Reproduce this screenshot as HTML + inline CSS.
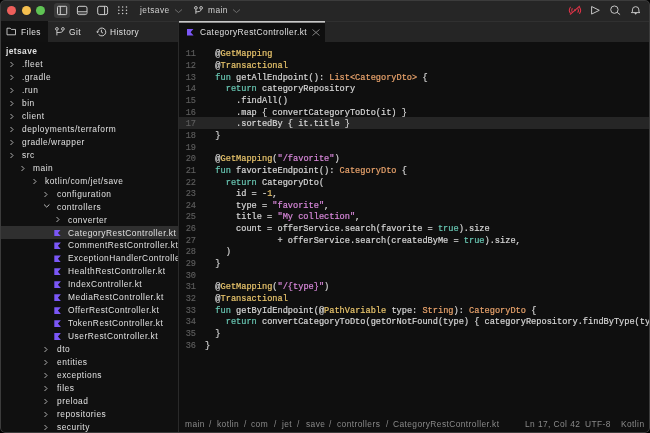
<!DOCTYPE html>
<html><head><meta charset="utf-8">
<style>
*{margin:0;padding:0;box-sizing:border-box}
html,body{width:650px;height:433px;overflow:hidden;background:#000}
body{position:relative;font-family:"Liberation Sans",sans-serif}
.ui,.cl,.ln,.status{will-change:transform}
.win{position:absolute;left:0;top:0;width:650px;height:433px;border-radius:5px;background:#101010;overflow:hidden}
.frame{position:absolute;left:0;top:0;width:650px;height:433px;border-radius:5px;border:1px solid #3c3c3c;pointer-events:none}
.abs{position:absolute}
.title{position:absolute;left:0;top:0;width:650px;height:22px;background:#262626;border-bottom:1px solid #303030}
.dot{position:absolute;width:9px;height:9px;border-radius:50%;top:5.7px}
.tabrow{position:absolute;left:0;top:22px;width:650px;height:20px;background:#252525}
.ui{font-size:8.4px;letter-spacing:0.45px;color:#e0e0e0;white-space:pre;position:absolute;line-height:10px}
.side{position:absolute;left:0;top:42px;width:178px;height:391px;background:#101010}
.divider{position:absolute;left:178px;top:22px;width:1px;height:411px;background:#2a2a2a}
.editor{position:absolute;left:179px;top:42px;width:471px;height:391px;background:#0f0f0f}
.row{position:absolute;left:0;height:13px;width:178px}
.chev{position:absolute;width:4px;height:4px;border-right:1px solid #bbb;border-bottom:1px solid #bbb;transform:rotate(-45deg)}
.chevd{transform:rotate(45deg)}
.kt{position:absolute;width:6.6px;height:6.8px;background:#7b57f7;clip-path:polygon(0 0,100% 0,55% 50%,100% 100%,0 100%)}
.code{position:absolute;left:0;top:0;font-family:"Liberation Mono",monospace;font-size:8.65px;white-space:pre;color:#d6d6d6}
.ln{position:absolute;width:196px;-webkit-text-stroke:0.15px currentColor;text-align:right;color:#5e5e5e;font-family:"Liberation Mono",monospace;font-size:8.65px;white-space:pre}
.cl{position:absolute;left:204.8px;-webkit-text-stroke:0.2px currentColor;font-family:"Liberation Mono",monospace;font-size:8.65px;white-space:pre;color:#d6d6d6}
.k{color:#68c6b2}
.a{color:#e9c56c}
.t{color:#e9a36c}
.s{color:#d888da}
.n{color:#e6c26a}
.status{font-size:8.4px;letter-spacing:0.42px;color:#8a8a8a;white-space:pre;position:absolute;line-height:10px}
</style></head><body>
<div class="win">
  <div class="title"></div>
  <div class="dot" style="left:7px;background:#ee5f5b"></div>
  <div class="dot" style="left:21.5px;background:#f5bf4f"></div>
  <div class="dot" style="left:36px;background:#5fc454"></div>

  <!-- toolbar icons -->
  <div class="abs" style="left:53.8px;top:3.2px;width:16px;height:14.5px;background:#3a3a3a;border-radius:3px"></div>
  <svg class="abs" style="left:0;top:0" width="140" height="21" viewBox="0 0 140 21">
    <g fill="none" stroke="#d0d0d0" stroke-width="1">
      <rect x="57.5" y="6.3" width="9.2" height="8.3" rx="1"/>
      <line x1="60.3" y1="6.3" x2="60.3" y2="14.6"/>
      <rect x="77.4" y="6.3" width="9.6" height="8.3" rx="1.8"/>
      <line x1="77.4" y1="11.8" x2="87" y2="11.8"/>
      <rect x="97.7" y="6.3" width="9.9" height="8.3" rx="1.8"/>
      <line x1="104.6" y1="6.3" x2="104.6" y2="14.6"/>
    </g>
    <rect x="78" y="12" width="8.5" height="2.2" fill="#555"/>
    <g fill="#d0d0d0">
      <circle cx="118.8" cy="6.9" r="0.75"/><circle cx="122.6" cy="6.9" r="0.75"/><circle cx="126.5" cy="6.9" r="0.75"/>
      <circle cx="118.8" cy="10.3" r="0.75"/><circle cx="122.6" cy="10.3" r="0.75"/><circle cx="126.5" cy="10.3" r="0.75"/>
      <circle cx="118.8" cy="13.5" r="0.75"/><circle cx="122.6" cy="13.5" r="0.75"/><circle cx="126.5" cy="13.5" r="0.75"/>
    </g>
  </svg>
  <div class="ui" style="left:139.5px;top:5px;color:#d0d0d0">jetsave</div>
  <svg class="abs" style="left:174px;top:8px" width="9" height="6"><polyline points="1,1.5 4.5,4.5 8,1.5" fill="none" stroke="#777" stroke-width="0.9"/></svg>
  <svg class="abs" style="left:193px;top:5px" width="11" height="11" viewBox="0 0 11 11"><g fill="none" stroke="#d0d0d0" stroke-width="0.95"><circle cx="2.9" cy="2.9" r="1.35"/><circle cx="8.1" cy="2.9" r="1.35"/><line x1="2.9" y1="4.5" x2="2.9" y2="8.8"/><path d="M8.1 4.5 C8.1 6.6 5.5 6.8 2.9 6.8"/></g></svg>
  <div class="ui" style="left:207.5px;top:5px;color:#d0d0d0">main</div>
  <svg class="abs" style="left:232px;top:8px" width="9" height="6"><polyline points="1,1.5 4.5,4.5 8,1.5" fill="none" stroke="#777" stroke-width="0.9"/></svg>

  <!-- right icons -->
  <svg class="abs" style="left:566px;top:3px" width="80" height="16" viewBox="0 0 80 16">
    <g fill="none" stroke="#dd3448" stroke-width="1.05" stroke-linecap="round">
      <path d="M4.4 4.2 Q2.2 7.2 4.4 10.2"/><path d="M6.2 5.6 Q5.1 7.3 6.2 9.2"/>
      <path d="M13.6 4.4 Q15.7 7.4 13.6 10.4"/><path d="M11.9 5.8 Q13 7.5 11.9 9.3"/>
      <line x1="4.3" y1="11.3" x2="13.6" y2="3.2"/>
    </g>
    <circle cx="8.9" cy="7.3" r="1" fill="#dd3448"/>
    <path d="M25.6 3.5 L33.3 7.3 L25.6 11.1 Z" fill="none" stroke="#c4c4c4" stroke-width="1" stroke-linejoin="round"/>
    <g fill="none" stroke="#c4c4c4" stroke-width="1"><circle cx="48.4" cy="6.65" r="3.7"/><line x1="51.1" y1="9.35" x2="54.1" y2="11.6"/></g>
    <path d="M66.4 8.8 L66.4 6.9 A3.25 3.25 0 0 1 72.9 6.9 L72.9 8.8 L74 9.6 L65.3 9.6 Z" fill="none" stroke="#c4c4c4" stroke-width="1" stroke-linejoin="round"/>
    <path d="M68.3 10.1 L71 10.1 L69.65 11.8 Z" fill="#c4c4c4"/>
  </svg>

  <!-- tab row -->
  <div class="tabrow"></div>
  <div class="abs" style="left:0;top:21px;width:48px;height:21px;background:#111"></div>
  <svg class="abs" style="left:6px;top:27px" width="11" height="9" viewBox="0 0 11 9"><path d="M1 1.2 L4.2 1.2 L5.3 2.4 L9.5 2.4 L9.5 7.8 L1 7.8 Z" fill="none" stroke="#cfcfcf" stroke-width="0.9"/></svg>
  <div class="ui" style="left:20.5px;top:27px">Files</div>
  <svg class="abs" style="left:54px;top:26px" width="11" height="11" viewBox="0 0 11 11"><g fill="none" stroke="#d0d0d0" stroke-width="0.95"><circle cx="2.9" cy="2.9" r="1.35"/><circle cx="8.9" cy="2.9" r="1.35"/><line x1="2.9" y1="4.5" x2="2.9" y2="9.4"/><path d="M8.9 4.5 C8.9 6.6 5.5 6.5 2.9 6.5"/></g></svg>
  <div class="ui" style="left:68.5px;top:27px">Git</div>
  <svg class="abs" style="left:95px;top:26px" width="12" height="12" viewBox="0 0 12 12"><g fill="none" stroke="#d4d4d4" stroke-width="0.95" stroke-linecap="round"><path d="M2.75 6.1 A4 4 0 1 1 3.9 8.8"/><polyline points="6.4,4.1 6.4,6.2 7.7,6.9"/></g><path d="M1.2 5.4 L3.6 5.4 L2.5 7.2 Z" fill="#d4d4d4"/></svg>
  <div class="ui" style="left:110px;top:27px">History</div>

  <!-- editor tab -->
  <div class="abs" style="left:179px;top:21px;width:146px;height:21px;background:#0f0f0f"></div><div class="abs" style="left:179px;top:21px;width:146px;height:1px;background:#c8c8c8"></div><div class="abs" style="left:179px;top:22px;width:146px;height:1px;background:#8c8c8c"></div>
  <div class="kt" style="left:187px;top:28.8px"></div>
  <div class="ui" style="left:199.5px;top:27px">CategoryRestController.kt</div>
  <svg class="abs" style="left:312px;top:28.5px" width="8" height="7"><g stroke="#8a8a8a" stroke-width="0.9"><line x1="0.5" y1="0.5" x2="7.5" y2="6.5"/><line x1="7.5" y1="0.5" x2="0.5" y2="6.5"/></g></svg>

  <!-- sidebar -->
  <div class="side" id="side"></div>
  <div class="divider"></div>
  <div class="editor"></div>
  <div id="tree" style="position:absolute;left:0;top:0;width:178px;height:433px;overflow:hidden"><div class="ui" style="left:5.9px;top:46.40px;font-weight:bold;letter-spacing:0.42px">jetsave</div>
<svg class="abs" style="left:8.50px;top:61.05px" width="7" height="8"><polyline points="1.5,1 4,3.5 1.5,6" fill="none" stroke="#c4c4c4" stroke-width="0.9"/></svg>
<div class="ui" style="left:21.80px;top:59.15px;letter-spacing:0.5px">.fleet</div>
<svg class="abs" style="left:8.50px;top:74.00px" width="7" height="8"><polyline points="1.5,1 4,3.5 1.5,6" fill="none" stroke="#c4c4c4" stroke-width="0.9"/></svg>
<div class="ui" style="left:21.80px;top:72.10px;letter-spacing:0.5px">.gradle</div>
<svg class="abs" style="left:8.50px;top:86.95px" width="7" height="8"><polyline points="1.5,1 4,3.5 1.5,6" fill="none" stroke="#c4c4c4" stroke-width="0.9"/></svg>
<div class="ui" style="left:21.80px;top:85.05px;letter-spacing:0.5px">.run</div>
<svg class="abs" style="left:8.50px;top:99.90px" width="7" height="8"><polyline points="1.5,1 4,3.5 1.5,6" fill="none" stroke="#c4c4c4" stroke-width="0.9"/></svg>
<div class="ui" style="left:21.80px;top:98.00px;letter-spacing:0.5px">bin</div>
<svg class="abs" style="left:8.50px;top:112.85px" width="7" height="8"><polyline points="1.5,1 4,3.5 1.5,6" fill="none" stroke="#c4c4c4" stroke-width="0.9"/></svg>
<div class="ui" style="left:21.80px;top:110.95px;letter-spacing:0.5px">client</div>
<svg class="abs" style="left:8.50px;top:125.80px" width="7" height="8"><polyline points="1.5,1 4,3.5 1.5,6" fill="none" stroke="#c4c4c4" stroke-width="0.9"/></svg>
<div class="ui" style="left:21.80px;top:123.90px;letter-spacing:0.5px">deployments/terraform</div>
<svg class="abs" style="left:8.50px;top:138.75px" width="7" height="8"><polyline points="1.5,1 4,3.5 1.5,6" fill="none" stroke="#c4c4c4" stroke-width="0.9"/></svg>
<div class="ui" style="left:21.80px;top:136.85px;letter-spacing:0.5px">gradle/wrapper</div>
<svg class="abs" style="left:8.50px;top:151.70px" width="7" height="8"><polyline points="1.5,1 4,3.5 1.5,6" fill="none" stroke="#c4c4c4" stroke-width="0.9"/></svg>
<div class="ui" style="left:21.80px;top:149.80px;letter-spacing:0.5px">src</div>
<svg class="abs" style="left:20.10px;top:164.65px" width="7" height="8"><polyline points="1.5,1 4,3.5 1.5,6" fill="none" stroke="#c4c4c4" stroke-width="0.9"/></svg>
<div class="ui" style="left:33.40px;top:162.75px;letter-spacing:0.5px">main</div>
<svg class="abs" style="left:31.70px;top:177.60px" width="7" height="8"><polyline points="1.5,1 4,3.5 1.5,6" fill="none" stroke="#c4c4c4" stroke-width="0.9"/></svg>
<div class="ui" style="left:45.00px;top:175.70px;letter-spacing:0.5px">kotlin/com/jet/save</div>
<svg class="abs" style="left:43.30px;top:190.55px" width="7" height="8"><polyline points="1.5,1 4,3.5 1.5,6" fill="none" stroke="#c4c4c4" stroke-width="0.9"/></svg>
<div class="ui" style="left:56.60px;top:188.65px;letter-spacing:0.5px">configuration</div>
<svg class="abs" style="left:43.30px;top:203.30px" width="8" height="6"><polyline points="1,1.5 3.7,4.1 6.4,1.5" fill="none" stroke="#c4c4c4" stroke-width="0.95"/></svg>
<div class="ui" style="left:56.60px;top:201.60px;letter-spacing:0.5px">controllers</div>
<svg class="abs" style="left:54.90px;top:216.45px" width="7" height="8"><polyline points="1.5,1 4,3.5 1.5,6" fill="none" stroke="#c4c4c4" stroke-width="0.9"/></svg>
<div class="ui" style="left:68.20px;top:214.55px;letter-spacing:0.5px">converter</div>
<div class="abs" style="left:1px;top:226.20px;width:177px;height:12.6px;background:#2f2f2f"></div>
<div class="kt" style="left:54.30px;top:229.50px"></div>
<div class="ui" style="left:68.20px;top:227.50px;letter-spacing:0.5px">CategoryRestController.kt</div>
<div class="kt" style="left:54.30px;top:242.45px"></div>
<div class="ui" style="left:68.20px;top:240.45px;letter-spacing:0.5px">CommentRestController.kt</div>
<div class="kt" style="left:54.30px;top:255.40px"></div>
<div class="ui" style="left:68.20px;top:253.40px;letter-spacing:0.5px">ExceptionHandlerController.kt</div>
<div class="kt" style="left:54.30px;top:268.35px"></div>
<div class="ui" style="left:68.20px;top:266.35px;letter-spacing:0.5px">HealthRestController.kt</div>
<div class="kt" style="left:54.30px;top:281.30px"></div>
<div class="ui" style="left:68.20px;top:279.30px;letter-spacing:0.5px">IndexController.kt</div>
<div class="kt" style="left:54.30px;top:294.25px"></div>
<div class="ui" style="left:68.20px;top:292.25px;letter-spacing:0.5px">MediaRestController.kt</div>
<div class="kt" style="left:54.30px;top:307.20px"></div>
<div class="ui" style="left:68.20px;top:305.20px;letter-spacing:0.5px">OfferRestController.kt</div>
<div class="kt" style="left:54.30px;top:320.15px"></div>
<div class="ui" style="left:68.20px;top:318.15px;letter-spacing:0.5px">TokenRestController.kt</div>
<div class="kt" style="left:54.30px;top:333.10px"></div>
<div class="ui" style="left:68.20px;top:331.10px;letter-spacing:0.5px">UserRestController.kt</div>
<svg class="abs" style="left:43.30px;top:345.95px" width="7" height="8"><polyline points="1.5,1 4,3.5 1.5,6" fill="none" stroke="#c4c4c4" stroke-width="0.9"/></svg>
<div class="ui" style="left:56.60px;top:344.05px;letter-spacing:0.5px">dto</div>
<svg class="abs" style="left:43.30px;top:358.90px" width="7" height="8"><polyline points="1.5,1 4,3.5 1.5,6" fill="none" stroke="#c4c4c4" stroke-width="0.9"/></svg>
<div class="ui" style="left:56.60px;top:357.00px;letter-spacing:0.5px">entities</div>
<svg class="abs" style="left:43.30px;top:371.85px" width="7" height="8"><polyline points="1.5,1 4,3.5 1.5,6" fill="none" stroke="#c4c4c4" stroke-width="0.9"/></svg>
<div class="ui" style="left:56.60px;top:369.95px;letter-spacing:0.5px">exceptions</div>
<svg class="abs" style="left:43.30px;top:384.80px" width="7" height="8"><polyline points="1.5,1 4,3.5 1.5,6" fill="none" stroke="#c4c4c4" stroke-width="0.9"/></svg>
<div class="ui" style="left:56.60px;top:382.90px;letter-spacing:0.5px">files</div>
<svg class="abs" style="left:43.30px;top:397.75px" width="7" height="8"><polyline points="1.5,1 4,3.5 1.5,6" fill="none" stroke="#c4c4c4" stroke-width="0.9"/></svg>
<div class="ui" style="left:56.60px;top:395.85px;letter-spacing:0.5px">preload</div>
<svg class="abs" style="left:43.30px;top:410.70px" width="7" height="8"><polyline points="1.5,1 4,3.5 1.5,6" fill="none" stroke="#c4c4c4" stroke-width="0.9"/></svg>
<div class="ui" style="left:56.60px;top:408.80px;letter-spacing:0.5px">repositories</div>
<svg class="abs" style="left:43.30px;top:423.65px" width="7" height="8"><polyline points="1.5,1 4,3.5 1.5,6" fill="none" stroke="#c4c4c4" stroke-width="0.9"/></svg>
<div class="ui" style="left:56.60px;top:421.75px;letter-spacing:0.5px">security</div></div><!--/tree-->
  <div id="code"><div class="abs" style="left:179px;top:117.21px;width:470px;height:11.5px;background:#262626"></div>
<div class="ln" style="left:0;top:49.25px;line-height:11.6px">11</div>
<div class="cl" style="top:49.25px;line-height:11.6px">  <span class="w">@</span><span class="a">GetMapping</span></div>
<div class="ln" style="left:0;top:60.91px;line-height:11.6px">12</div>
<div class="cl" style="top:60.91px;line-height:11.6px">  <span class="w">@</span><span class="a">Transactional</span></div>
<div class="ln" style="left:0;top:72.57px;line-height:11.6px">13</div>
<div class="cl" style="top:72.57px;line-height:11.6px">  <span class="k">fun</span> getAllEndpoint(): <span class="t">List&lt;CategoryDto&gt;</span> {</div>
<div class="ln" style="left:0;top:84.23px;line-height:11.6px">14</div>
<div class="cl" style="top:84.23px;line-height:11.6px">    <span class="k">return</span> categoryRepository</div>
<div class="ln" style="left:0;top:95.89px;line-height:11.6px">15</div>
<div class="cl" style="top:95.89px;line-height:11.6px">      .findAll()</div>
<div class="ln" style="left:0;top:107.55px;line-height:11.6px">16</div>
<div class="cl" style="top:107.55px;line-height:11.6px">      .map { convertCategoryToDto(it) }</div>
<div class="ln" style="left:0;top:119.21px;line-height:11.6px">17</div>
<div class="cl" style="top:119.21px;line-height:11.6px">      .sortedBy { it.title }</div>
<div class="ln" style="left:0;top:130.87px;line-height:11.6px">18</div>
<div class="cl" style="top:130.87px;line-height:11.6px">  }</div>
<div class="ln" style="left:0;top:142.53px;line-height:11.6px">19</div>
<div class="cl" style="top:142.53px;line-height:11.6px"></div>
<div class="ln" style="left:0;top:154.19px;line-height:11.6px">20</div>
<div class="cl" style="top:154.19px;line-height:11.6px">  <span class="w">@</span><span class="a">GetMapping</span>(<span class="s">"/favorite"</span>)</div>
<div class="ln" style="left:0;top:165.85px;line-height:11.6px">21</div>
<div class="cl" style="top:165.85px;line-height:11.6px">  <span class="k">fun</span> favoriteEndpoint(): <span class="t">CategoryDto</span> {</div>
<div class="ln" style="left:0;top:177.51px;line-height:11.6px">22</div>
<div class="cl" style="top:177.51px;line-height:11.6px">    <span class="k">return</span> CategoryDto(</div>
<div class="ln" style="left:0;top:189.17px;line-height:11.6px">23</div>
<div class="cl" style="top:189.17px;line-height:11.6px">      id = -<span class="n">1</span>,</div>
<div class="ln" style="left:0;top:200.83px;line-height:11.6px">24</div>
<div class="cl" style="top:200.83px;line-height:11.6px">      type = <span class="s">"favorite"</span>,</div>
<div class="ln" style="left:0;top:212.49px;line-height:11.6px">25</div>
<div class="cl" style="top:212.49px;line-height:11.6px">      title = <span class="s">"My collection"</span>,</div>
<div class="ln" style="left:0;top:224.15px;line-height:11.6px">26</div>
<div class="cl" style="top:224.15px;line-height:11.6px">      count = offerService.search(favorite = <span class="k">true</span>).size</div>
<div class="ln" style="left:0;top:235.81px;line-height:11.6px">27</div>
<div class="cl" style="top:235.81px;line-height:11.6px">              + offerService.search(createdByMe = <span class="k">true</span>).size,</div>
<div class="ln" style="left:0;top:247.47px;line-height:11.6px">28</div>
<div class="cl" style="top:247.47px;line-height:11.6px">    )</div>
<div class="ln" style="left:0;top:259.13px;line-height:11.6px">29</div>
<div class="cl" style="top:259.13px;line-height:11.6px">  }</div>
<div class="ln" style="left:0;top:270.79px;line-height:11.6px">30</div>
<div class="cl" style="top:270.79px;line-height:11.6px"></div>
<div class="ln" style="left:0;top:282.45px;line-height:11.6px">31</div>
<div class="cl" style="top:282.45px;line-height:11.6px">  <span class="w">@</span><span class="a">GetMapping</span>(<span class="s">"/{type}"</span>)</div>
<div class="ln" style="left:0;top:294.11px;line-height:11.6px">32</div>
<div class="cl" style="top:294.11px;line-height:11.6px">  <span class="w">@</span><span class="a">Transactional</span></div>
<div class="ln" style="left:0;top:305.77px;line-height:11.6px">33</div>
<div class="cl" style="top:305.77px;line-height:11.6px">  <span class="k">fun</span> getByIdEndpoint(<span class="w">@</span><span class="a">PathVariable</span> type: <span class="t">String</span>): <span class="t">CategoryDto</span> {</div>
<div class="ln" style="left:0;top:317.43px;line-height:11.6px">34</div>
<div class="cl" style="top:317.43px;line-height:11.6px">    <span class="k">return</span> convertCategoryToDto(getOrNotFound(type) { categoryRepository.findByType(type) })</div>
<div class="ln" style="left:0;top:329.09px;line-height:11.6px">35</div>
<div class="cl" style="top:329.09px;line-height:11.6px">  }</div>
<div class="ln" style="left:0;top:340.75px;line-height:11.6px">36</div>
<div class="cl" style="top:340.75px;line-height:11.6px">}</div>
<div class="status" style="left:184.60px;top:418.5px">main</div>
<div class="status" style="left:209.30px;top:418.5px">/</div>
<div class="status" style="left:217.20px;top:418.5px">kotlin</div>
<div class="status" style="left:244.00px;top:418.5px">/</div>
<div class="status" style="left:251.40px;top:418.5px">com</div>
<div class="status" style="left:274.40px;top:418.5px">/</div>
<div class="status" style="left:281.90px;top:418.5px">jet</div>
<div class="status" style="left:297.30px;top:418.5px">/</div>
<div class="status" style="left:305.50px;top:418.5px">save</div>
<div class="status" style="left:329.20px;top:418.5px">/</div>
<div class="status" style="left:337.10px;top:418.5px">controllers</div>
<div class="status" style="left:385.50px;top:418.5px">/</div>
<div class="status" style="left:393.40px;top:418.5px">CategoryRestController.kt</div>
<div class="status" style="left:524.80px;top:418.5px">Ln 17, Col 42</div>
<div class="status" style="left:585.40px;top:418.5px">UTF-8</div>
<div class="status" style="left:621.00px;top:418.5px">Kotlin</div></div><!--/code-->
<div class="frame"></div>
</div>
</body></html>
